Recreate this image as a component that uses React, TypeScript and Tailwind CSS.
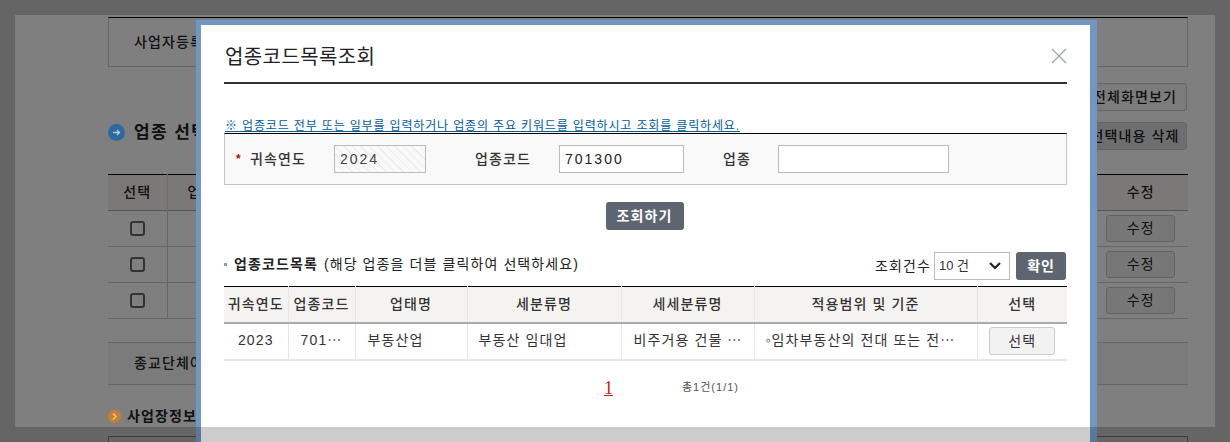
import React from "react";

function BgRow() {
  return (
    <tr className="h-[36px] border-b border-[#ccc]">
      <td className="w-[59px] border-r border-[#ccc] text-center align-middle">
        <span className="inline-block w-[15px] h-[15px] mt-[6px] rounded-[3px] border-2 border-[#666] bg-white" />
      </td>
      <td className="border-r border-[#ccc]" />
      <td className="w-[95px] text-center">
        <span className="inline-flex w-[69px] h-[27px] items-center justify-center rounded-[3px] border border-[#c4c4c4] bg-[#eee] text-[14px] tracking-[1.1px] text-[#222]">수정</span>
      </td>
    </tr>
  );
}

function Background() {
  return (
    <div className="w-[1230px] h-[442px] overflow-hidden bg-white pl-[108px] pt-[17px] text-[#222]">
      <div className="w-[1080px] h-[50px] border border-[#ccc] border-t-black flex items-center pl-[25px] text-[14px] tracking-[1.1px] font-medium text-[#222]">
        사업자등록번호
      </div>
      <div className="w-[1080px] flex justify-end pr-[1px] pt-[16px]">
        <span className="w-[104px] h-[28px] flex items-center justify-center rounded-[3px] border border-[#ccc] bg-[#f8f8f8] text-[14px] tracking-[1.1px] font-medium">전체화면보기</span>
      </div>
      <div className="w-[1080px] flex items-start justify-between pt-[11px]">
        <div className="flex items-center gap-[9px] -mt-[2px]">
          <svg width="17" height="17" viewBox="0 0 17 17" className="relative z-[1]">
            <circle cx="8.5" cy="8.5" r="8.5" fill="#2b6a9e" />
            <path d="M5 8.5 H11.5 M9 6 L11.5 8.5 L9 11" stroke="#b8c8d8" strokeWidth="1.3" fill="none" />
          </svg>
          <span className="text-[17px] font-bold tracking-[1.4px]">업종 선택</span>
        </div>
        <span className="w-[104px] h-[28px] mr-[1px] flex items-center justify-center rounded-[3px] border border-[#ccc] bg-[#ddd] text-[14px] tracking-[1.1px] font-medium">선택내용 삭제</span>
      </div>
      <table className="w-[1080px] mt-[24px] border-collapse border-t border-black table-fixed">
        <tbody>
          <tr className="h-[36px] bg-[#f4f3f1] border-b border-[#aaa] text-[14px] tracking-[1.1px] text-[#222]">
            <th className="w-[59px] border-r border-[#ddd] font-medium">선택</th>
            <th className="border-r border-[#ddd] font-medium text-left pl-[20px]">업종코드</th>
            <th className="w-[95px] font-medium">수정</th>
          </tr>
          <BgRow />
          <BgRow />
          <BgRow />
        </tbody>
      </table>
      <div className="mt-[23px] w-[1080px] h-[43px] border-y border-[#ccc] bg-[#f6f6f6] flex items-center pl-[26px] text-[14px] tracking-[1.1px] font-medium text-[#222]">
        종교단체여부
      </div>
      <div className="flex items-center gap-[6px] mt-[21px]">
        <svg width="13" height="13" viewBox="0 0 13 13" className="relative z-[1]">
          <circle cx="6.5" cy="6.5" r="6.5" fill="#c88030" />
          <path d="M5 3.5 L8 6.5 L5 9.5" stroke="#e8c8a0" strokeWidth="1.5" fill="none" />
        </svg>
        <span className="text-[14px] font-bold tracking-[1.1px]">사업장정보</span>
      </div>
      <div className="mt-[9px] w-[1080px] h-[30px] border border-[#999]" />
    </div>
  );
}

const ths = [
  ["귀속연도", "w-[64px]"],
  ["업종코드", "w-[67px]"],
  ["업태명", "w-[112px]"],
  ["세분류명", "w-[154px]"],
  ["세세분류명", "w-[133px]"],
  ["적용범위 및 기준", "w-[223px]"],
  ["선택", ""],
];

function Modal() {
  return (
    <div className="absolute z-[2] left-[196px] top-[20px] w-[901px] h-[422px] border-t-[5px] border-l-[5px] border-r-[7px] border-[#7096c4] bg-white">
      <div className="ml-[23px] w-[843px] h-[59px] border-b-2 border-[#333] flex items-start justify-between pt-[19px]">
        <h1 className="ml-[1px] text-[20px] leading-[26px] text-[#222] tracking-[0.4px]">업종코드목록조회</h1>
        <svg width="16" height="16" viewBox="0 0 16 16" className="mt-[4px]" stroke="#9aa0b4" strokeWidth="1.1" fill="none">
          <path d="M1 1 L15 15 M15 1 L1 15" />
        </svg>
      </div>
      <div className="ml-[23px] w-[843px]">
        <p className="pt-[35px] pl-[1px] text-[12px] leading-[14px] text-[#005a9e] underline underline-offset-[1px] h-[49px] tracking-[0.85px] whitespace-nowrap">
          ※ 업종코드 전부 또는 일부를 입력하거나 업종의 주요 키워드를 입력하시고 조회를 클릭하세요.
        </p>
        <div className="h-[52px] border border-[#c4c4c4] border-t-black bg-[#f9f9f9] flex items-center text-[14px] text-[#333] tracking-[1.1px]">
          <span className="ml-[11px] w-[14px] text-[#d00000] text-[12px] font-bold leading-none">*</span>
          <span className="w-[84px] font-medium">귀속연도</span>
          <div className="w-[92px] h-[28px] border border-[#bbb] flex items-center pl-[5px] text-[#444] tracking-[2px] bg-[repeating-linear-gradient(45deg,#ececec_0px,#ececec_1px,#f9f9f9_1px,#f9f9f9_6px)]">2024</div>
          <span className="ml-[49px] w-[84px] font-medium">업종코드</span>
          <div className="w-[125px] h-[28px] border border-[#bbb] bg-white flex items-center pl-[5px] text-[#222] tracking-[2px]">701300</div>
          <span className="ml-[39px] w-[55px] font-medium">업종</span>
          <div className="w-[171px] h-[28px] border border-[#bbb] bg-white" />
        </div>
        <div className="flex justify-center pt-[17px] pr-[2px]">
          <button className="w-[78px] h-[28px] rounded-[3px] bg-[#5d6570] text-white text-[14px] font-bold tracking-[1.1px]">조회하기</button>
        </div>
        <div className="flex items-center justify-between h-[28px] mt-[22px]">
          <div className="flex items-center text-[14px] text-[#222] pb-[4px] tracking-[1.1px] whitespace-nowrap">
            <span className="w-[3px] h-[3px] bg-[#999] mr-[7px]" />
            <b className="font-bold">업종코드목록</b>
            <span className="ml-[6px]">(해당 업종을 더블 클릭하여 선택하세요)</span>
          </div>
          <div className="flex items-center text-[14px] text-[#222] pr-[1px]">
            <span className="mr-[3px] tracking-[1.1px]">조회건수</span>
            <div className="w-[76px] h-[28px] border border-[#bbb] flex items-center justify-between pl-[4px] pr-[7px] text-[#333] text-[13px]">
              10 건
              <svg width="14" height="10" viewBox="0 0 14 10" fill="none" stroke="#222" strokeWidth="2.2"><path d="M2 2 L7 7 L12 2" /></svg>
            </div>
            <button className="ml-[6px] w-[50px] h-[28px] rounded-[3px] bg-[#5d6570] text-white font-bold text-[14px] tracking-[0.8px]">확인</button>
          </div>
        </div>
        <table className="w-[843px] mt-[6px] table-fixed border-collapse border-t border-black text-[14px] tracking-[1.1px]">
          <thead>
            <tr className="h-[36px] bg-[#f4f3f1] border-b-2 border-[#aaa] text-[#333]">
              {ths.map(([t, w], i) => (
                <th key={i} className={`${w} font-medium border-r last:border-r-0 border-[#e6e6e6] whitespace-nowrap`}>{t}</th>
              ))}
            </tr>
          </thead>
          <tbody>
            <tr className="h-[37px] border-b-2 border-[#e6e6e6] text-[#333]">
              <td className="text-center border-r border-[#e6e6e6] pb-[2px]">2023</td>
              <td className="text-center border-r border-[#e6e6e6] pb-[2px]">701⋯</td>
              <td className="pl-[12px] border-r border-[#e6e6e6] pb-[2px]">부동산업</td>
              <td className="pl-[11px] border-r border-[#e6e6e6] pb-[2px]">부동산 임대업</td>
              <td className="pl-[12px] border-r border-[#e6e6e6] pb-[2px] truncate">비주거용 건물 ⋯</td>
              <td className="pl-[11px] border-r border-[#e6e6e6] pb-[2px] truncate">◦임차부동산의 전대 또는 전⋯</td>
              <td className="text-center">
                <span className="inline-flex w-[66px] h-[28px] items-center justify-center rounded-[3px] border border-[#ccc] bg-[#f2f2f2] align-middle">선택</span>
              </td>
            </tr>
          </tbody>
        </table>
        <div className="h-[54px] flex items-center pl-[380px]">
          <span className="text-[18px] leading-none text-[#d01818] underline font-['Liberation_Serif',serif]">1</span>
          <span className="ml-[69px] text-[11px] text-[#555] tracking-[1px] whitespace-nowrap">총1건(1/1)</span>
        </div>
      </div>
    </div>
  );
}

export default function App() {
  return (
    <div className="relative w-[1230px] h-[442px] overflow-hidden font-['Liberation_Sans','Noto_Sans_CJK_KR',sans-serif]">
      <Background />
      <div className="absolute inset-0 bg-black/50" />
      <Modal />
      <div className="absolute z-[3] inset-0 border-[15px] border-black/20 pointer-events-none" />
    </div>
  );
}
